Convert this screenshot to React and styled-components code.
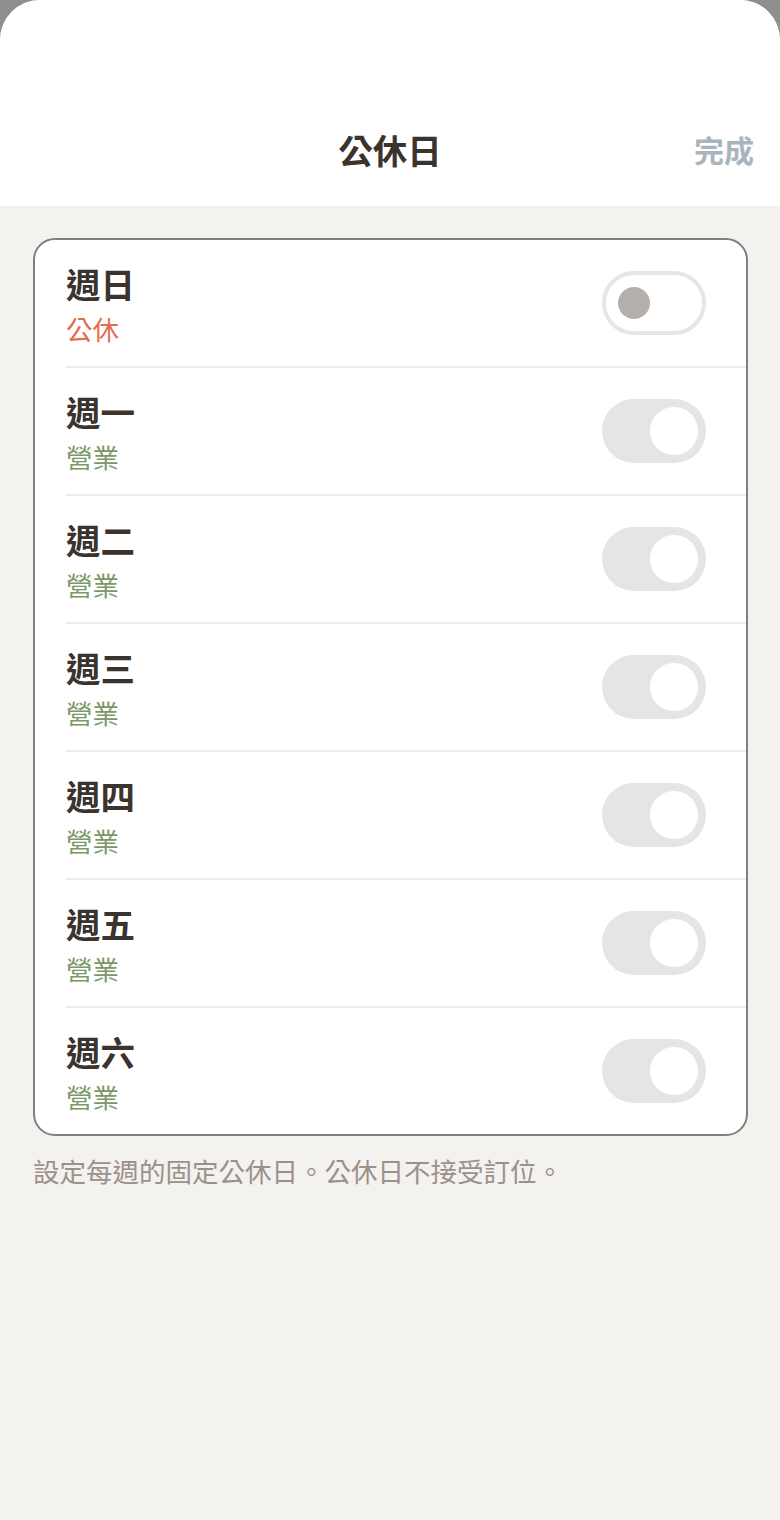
import React from "react";
import styled, { createGlobalStyle } from "styled-components";

const Global = createGlobalStyle`
  html, body { margin: 0; padding: 0; background: #8f8f8f; }
  body { font-family: "Noto Sans CJK TC", "Noto Sans", sans-serif; }
  #root { min-height: 1520px; }
`;

const Sheet = styled.div`
  width: 780px;
  height: 1520px;
  background: #f3f2ef;
  border-radius: 40px 40px 0 0;
  overflow: hidden;
  display: flex;
  flex-direction: column;
`;

const Header = styled.header`
  height: 206px;
  background: #ffffff;
  display: flex;
  align-items: flex-end;
  justify-content: center;
  position: relative;
  box-sizing: border-box;
  padding-bottom: 34px;
`;

const Title = styled.h1`
  margin: 0;
  font-size: 34.5px;
  font-weight: 700;
  color: #3b332e;
  line-height: 46px;
`;

const Done = styled.button`
  position: absolute;
  right: 26px;
  bottom: 35px;
  border: none;
  background: none;
  padding: 0;
  font-family: inherit;
  font-size: 30px;
  font-weight: 700;
  line-height: 44px;
  color: #a9b5bc;
`;

const Content = styled.main`
  padding: 32px 32px 0 33px;
  display: flex;
  flex-direction: column;
  gap: 17px;
`;

const Card = styled.div`
  background: #ffffff;
  border: 2px solid #7f7f7f;
  border-radius: 22px;
  overflow: hidden;
`;

const Row = styled.div`
  height: 126px;
  margin-left: 31px;
  padding-right: 40px;
  display: flex;
  align-items: center;
  justify-content: space-between;
  border-bottom: ${(p) => (p.$last ? "none" : "2px solid #ececec")};
`;

const Labels = styled.div`
  display: flex;
  flex-direction: column;
  gap: 8px;
  padding-top: 2px;
`;

const Day = styled.div`
  font-size: 34.5px;
  font-weight: 700;
  color: #3b332e;
  line-height: 42px;
`;

const Status = styled.div`
  font-size: 26.5px;
  line-height: 34px;
  color: ${(p) => (p.$closed ? "#e56c4f" : "#7b9866")};
`;

const Switch = styled.div`
  width: 104px;
  height: 64px;
  border-radius: 32px;
  box-sizing: border-box;
  position: relative;
  background: ${(p) => (p.$on ? "#e5e5e5" : "#ffffff")};
  border: ${(p) => (p.$on ? "none" : "4px solid #e6e6e6")};
`;

const Knob = styled.span`
  position: absolute;
  border-radius: 50%;
  ${(p) =>
    p.$on
      ? `width: 48px; height: 48px; top: 8px; right: 8px; background: #ffffff;`
      : `width: 32px; height: 32px; top: 12px; left: 12px; background: #b4afab;`}
`;

const Note = styled.p`
  margin: 0;
  font-size: 26.5px;
  line-height: 36px;
  color: #9b918a;
`;

const days = [
  { d: "週日", closed: true },
  { d: "週一" },
  { d: "週二" },
  { d: "週三" },
  { d: "週四" },
  { d: "週五" },
  { d: "週六" },
];

export default function App() {
  return (
    <>
      <Global />
      <Sheet>
        <Header>
          <Title>公休日</Title>
          <Done>完成</Done>
        </Header>
        <Content>
          <Card>
            {days.map((x, i) => (
              <Row key={x.d} $last={i === days.length - 1}>
                <Labels>
                  <Day>{x.d}</Day>
                  <Status $closed={x.closed}>{x.closed ? "公休" : "營業"}</Status>
                </Labels>
                <Switch $on={!x.closed}>
                  <Knob $on={!x.closed} />
                </Switch>
              </Row>
            ))}
          </Card>
          <Note>設定每週的固定公休日。公休日不接受訂位。</Note>
        </Content>
      </Sheet>
    </>
  );
}
